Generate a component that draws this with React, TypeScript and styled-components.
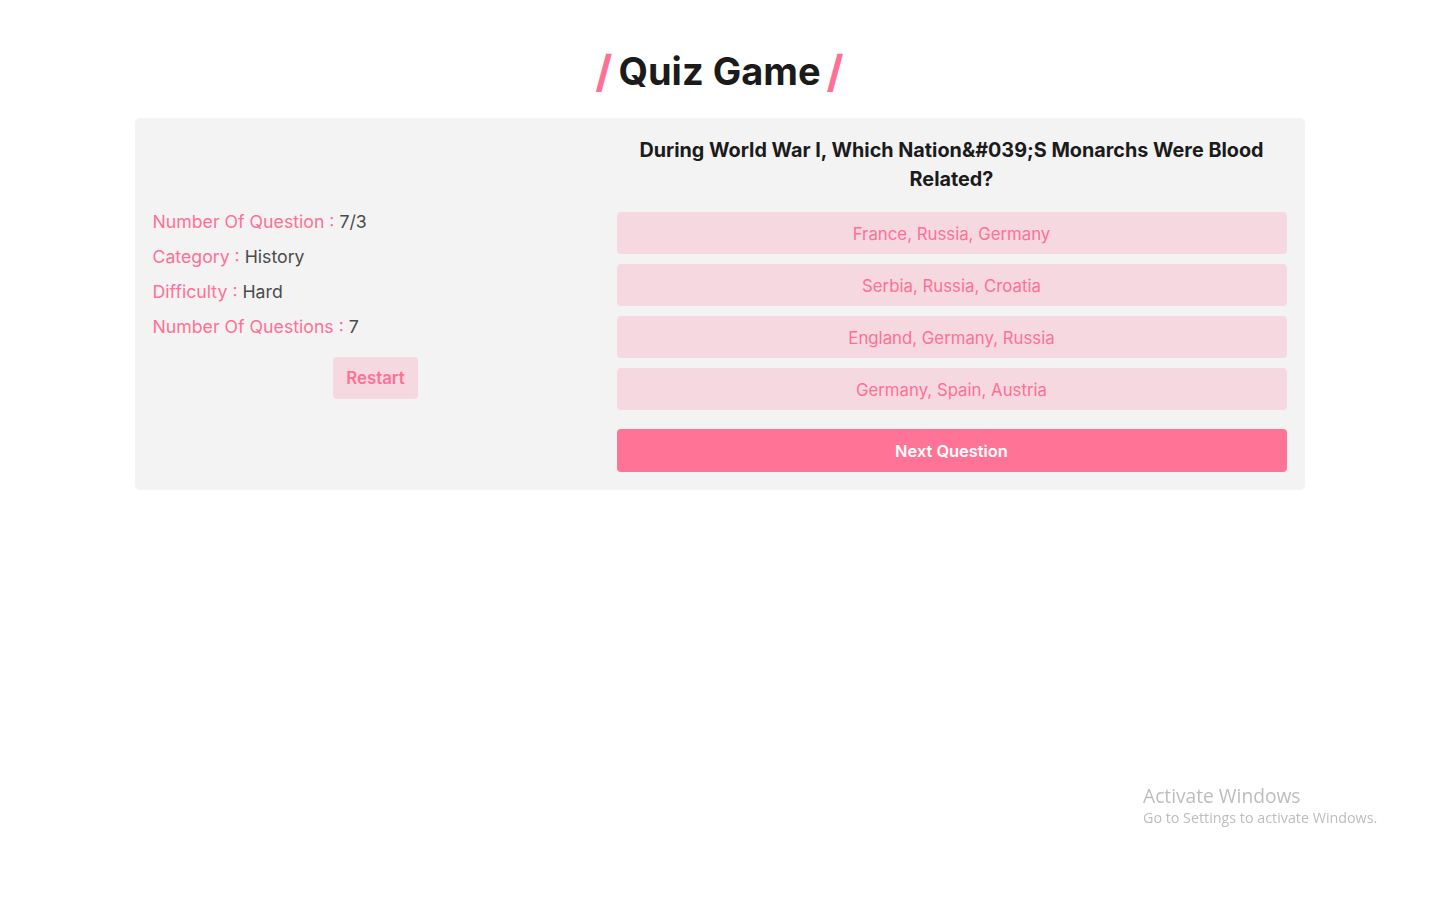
import React from "react";
import styled, { createGlobalStyle } from "styled-components";

const Global = createGlobalStyle`
  * { box-sizing: border-box; }
  body {
    margin: 0;
    background: #ffffff;
    font-family: "Inter", "Open Sans", sans-serif;
  }
`;

const Page = styled.div`
  width: 1170px;
  margin: 0 auto;
  padding-top: 46px;
`;

const Title = styled.h1`
  margin: 0 0 22px;
  display: flex;
  justify-content: center;
  align-items: center;
  gap: 6px;
  font-size: 38px;
  font-weight: 700;
  color: #1b1b1b;
  line-height: 50px;
`;

const Slash = styled.span`
  color: #ff7096;
  font-weight: 700;
  font-size: 44px;
`;

const Card = styled.div`
  background: #f3f3f3;
  border-radius: 5px;
  padding: 18px;
  display: flex;
  gap: 18px;
`;

const InfoCol = styled.div`
  width: 446px;
  display: flex;
  flex-direction: column;
  justify-content: center;
  padding-bottom: 6px;
`;

const InfoLine = styled.p`
  margin: 0;
  font-size: 17.7px;
  line-height: 35px;
  color: #4b4b4b;
`;

const Label = styled.span`
  color: #ff7096;
`;

const RestartRow = styled.div`
  display: flex;
  justify-content: center;
  margin-top: 13px;
`;

const RestartButton = styled.button`
  height: 42px;
  padding: 0 13px;
  border: none;
  border-radius: 4px;
  background: #f6d8e0;
  color: #ff7096;
  font-family: inherit;
  font-weight: 600;
  font-size: 16.8px;
`;

const QuestionCol = styled.div`
  flex: 1;
  display: flex;
  flex-direction: column;
`;

const Question = styled.h2`
  margin: 0 0 18px;
  text-align: center;
  font-size: 19.8px;
  line-height: 29px;
  font-weight: 700;
  color: #1b1b1b;
`;

const Options = styled.div`
  display: flex;
  flex-direction: column;
  gap: 10px;
`;

const Option = styled.button`
  height: 42px;
  width: 100%;
  padding: 2px 0 0;
  border: none;
  border-radius: 4px;
  background: #f6d8e0;
  color: #ff7096;
  font-family: inherit;
  font-size: 16.8px;
  font-weight: 400;
`;

const NextButton = styled.button`
  margin-top: 19px;
  height: 43px;
  width: 100%;
  border: none;
  border-radius: 4px;
  background: #ff7396;
  color: #ffffff;
  font-family: inherit;
  font-size: 16.4px;
  font-weight: 600;
`;

const Watermark = styled.div`
  position: fixed;
  left: 1143px;
  top: 784px;
  color: #bdbdbd;
  font-family: "Open Sans", "DejaVu Sans", sans-serif;
`;

const WmTitle = styled.div`
  font-size: 19.2px;
  line-height: 24px;
`;

const WmSub = styled.div`
  font-size: 14.3px;
  line-height: 20px;
`;

const info = [
  ["Number Of Question", "7/3"],
  ["Category", "History"],
  ["Difficulty", "Hard"],
  ["Number Of Questions", "7"],
];

const answers = [
  "France, Russia, Germany",
  "Serbia, Russia, Croatia",
  "England, Germany, Russia",
  "Germany, Spain, Austria",
];

export default function App() {
  return (
    <>
      <Global />
      <Page>
        <Title>
          <Slash>/</Slash>Quiz Game<Slash>/</Slash>
        </Title>
        <Card>
          <InfoCol>
            {info.map(([k, v]) => (
              <InfoLine key={k}>
                <Label>{k} : </Label>
                {v}
              </InfoLine>
            ))}
            <RestartRow>
              <RestartButton>Restart</RestartButton>
            </RestartRow>
          </InfoCol>
          <QuestionCol>
            <Question>
              During World War I, Which Nation&amp;#039;S Monarchs Were Blood Related?
            </Question>
            <Options>
              {answers.map((a) => (
                <Option key={a}>{a}</Option>
              ))}
            </Options>
            <NextButton>Next Question</NextButton>
          </QuestionCol>
        </Card>
      </Page>
      <Watermark>
        <WmTitle>Activate Windows</WmTitle>
        <WmSub>Go to Settings to activate Windows.</WmSub>
      </Watermark>
    </>
  );
}
